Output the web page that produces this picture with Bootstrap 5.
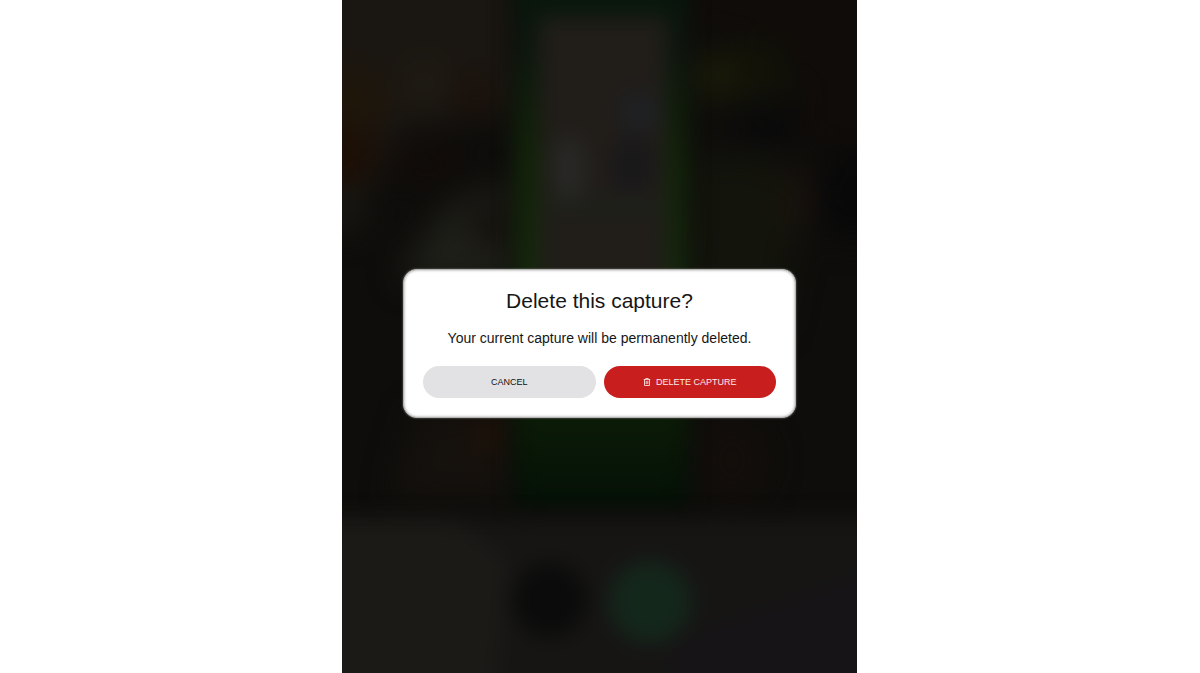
<!DOCTYPE html>
<html lang="en">
<head>
<meta charset="utf-8">
<meta name="viewport" content="width=device-width, initial-scale=1">
<title>Delete this capture?</title>
<link href="https://cdn.jsdelivr.net/npm/bootstrap@5.3.0/dist/css/bootstrap.min.css" rel="stylesheet">
<style>
  body { font-family: "Liberation Sans", Arial, sans-serif; background: #fff; }
  .stage { display: grid; grid-template-columns: 342fr 515fr 343fr; }
  .device { grid-column: 2; background: #110f0c; }
  .camera-view { inset: 0; }
  .overlay { padding: 14px 61px 0; }
  .confirm-box {
    padding: 19px; border-radius: 14px; color: #161616;
    border: 1px solid #b4b3b1; box-shadow: 0 0 2px #8b8a88, inset 0 0 3px #999;
  }
  .confirm-title { font-size: 21px; line-height: 24px; margin-bottom: 14px; font-weight: 400; }
  .confirm-text { font-size: 14px; line-height: 22px; margin-bottom: 17px; }
  .pill { height: 32px; font-size: 9px; line-height: 12px; gap: 5px; border: 0; padding: 0 8px; }
  .pill-cancel, .pill-cancel:hover { background: #e2e2e4; color: #111; }
  .pill-delete, .pill-delete:hover { background: #c81e1e; color: #fbe9e9; }
</style>
</head>
<body>
<div class="stage min-vh-100">
  <main class="device position-relative overflow-hidden d-flex flex-column">
    <!-- Dimmed, out-of-focus camera preview with its controls -->
    <svg class="camera-view position-absolute w-100 h-100" viewBox="0 0 515 673" preserveAspectRatio="none" aria-hidden="true">
      <defs>
        <filter id="soft" x="-50%" y="-50%" width="200%" height="200%" color-interpolation-filters="sRGB"><feGaussianBlur stdDeviation="16"/></filter>
        <filter id="near" x="-50%" y="-50%" width="200%" height="200%" color-interpolation-filters="sRGB"><feGaussianBlur stdDeviation="10"/></filter>
        <linearGradient id="pack" x1="0" y1="0" x2="0" y2="1">
          <stop offset="0" stop-color="#06160a"/><stop offset=".14" stop-color="#0d170e"/>
          <stop offset=".35" stop-color="#122409"/><stop offset=".6" stop-color="#15280d"/>
          <stop offset=".85" stop-color="#0a1a07"/><stop offset="1" stop-color="#041006"/>
        </linearGradient>
      </defs>
      <rect width="515" height="673" fill="#0e0d0b"/>
      <g filter="url(#soft)">
        <path d="M-40-40H175V115L60 130 30 190-40 220Z" fill="#1a1611"/>
        <ellipse cx="0" cy="100" rx="45" ry="30" fill="#1f160a"/>
        <ellipse cx="0" cy="155" rx="30" ry="30" fill="#1d0e04"/>
        <ellipse cx="85" cy="85" rx="24" ry="24" fill="#1f1b14"/>
        <ellipse cx="130" cy="95" rx="18" ry="20" fill="#1c0f09"/>
        <ellipse cx="85" cy="165" rx="35" ry="18" fill="#110b08"/>
        <ellipse cx="0" cy="212" rx="22" ry="20" fill="#191914"/>
        <path d="M60 270L110 200 170 185V280H60Z" fill="#1f2019"/>
        <ellipse cx="146" cy="226" rx="18" ry="18" fill="#120c09"/>
        <path d="M345 60L420 35 460 65 440 95 350 110Z" fill="#121308"/>
        <ellipse cx="372" cy="75" rx="26" ry="15" fill="#1d1d0b"/>
        <path d="M350 155H430L460 210 435 330H345Z" fill="#13140c"/>
        <ellipse cx="456" cy="200" rx="13" ry="38" fill="#1b130e"/>
        <ellipse cx="510" cy="195" rx="35" ry="45" fill="#080809"/>
        <ellipse cx="425" cy="125" rx="35" ry="14" fill="#08080a"/>
        <path d="M340-30H550V150H460V80L420 35H345Z" fill="#100c09"/>
        <path d="M75 410H170V500H50Z" fill="#15110d"/>
        <ellipse cx="147" cy="435" rx="14" ry="14" fill="#281405"/>
        <ellipse cx="390" cy="460" rx="35" ry="45" fill="#130e0a"/>
      </g>
      <g filter="url(#near)">
        <rect x="172" y="-30" width="174" height="538" fill="url(#pack)"/>
        <rect x="198" y="18" width="126" height="270" fill="#211d19"/>
        <ellipse cx="227" cy="168" rx="18" ry="34" fill="#272725"/>
        <ellipse cx="297" cy="112" rx="22" ry="22" fill="#1f2023"/>
        <ellipse cx="290" cy="165" rx="24" ry="30" fill="#1a191a"/>
        <rect x="205" y="200" width="116" height="14" fill="#1d211a"/>
      </g>
      <g filter="url(#near)">
        <path d="M-40 518H560V720H-40Z" fill="#161514"/>
        <path d="M-40 518H110L165 560 150 720H-40Z" fill="#1b1a17"/>
        <path d="M330 640L560 560V720H330Z" fill="#161416"/>
        <circle cx="208" cy="600" r="37" fill="#0b0b0b"/>
        <circle cx="308" cy="602" r="41" fill="#14271b"/>
      </g>
    </svg>

    <div class="overlay position-relative flex-grow-1 d-flex flex-column justify-content-center">
      <section class="confirm-box bg-white text-center" role="dialog" aria-modal="true" aria-labelledby="confirmTitle" aria-describedby="confirmText">
        <h1 class="confirm-title" id="confirmTitle">Delete this capture?</h1>
        <p class="confirm-text" id="confirmText">Your current capture will be permanently deleted.</p>
        <div class="row row-cols-2 gx-2">
          <div class="col">
            <button type="button" class="btn pill pill-cancel rounded-pill w-100">CANCEL</button>
          </div>
          <div class="col">
            <button type="button" class="btn pill pill-delete rounded-pill w-100 d-flex align-items-center justify-content-center">
              <svg width="8" height="8" viewBox="0 0 8 9" fill="none" stroke="currentColor" stroke-width="1" aria-hidden="true">
                <path d="M.3 1.8H7.7M2.6 1.6V.5H5.4V1.6M1.2 1.8V8.4H6.8V1.8M3.1 3.4V6.8M4.9 3.4V6.8"/>
              </svg>
              <span>DELETE CAPTURE</span>
            </button>
          </div>
        </div>
      </section>
    </div>
  </main>
</div>
<script src="https://cdn.jsdelivr.net/npm/bootstrap@5.3.0/dist/js/bootstrap.bundle.min.js"></script>
</body>
</html>
